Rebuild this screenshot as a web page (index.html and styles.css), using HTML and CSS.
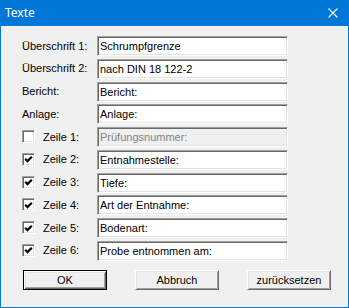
FILE: index.html
```html
<!DOCTYPE html>
<html lang="de">

<head>
    <meta charset="UTF-8">
    <title>Texte</title>
    <link rel="stylesheet" href="styles.css">
</head>

<body>
    <div class="window">
        <div class="titlebar">
            <span class="title">Texte</span>
            <span class="close">
                <svg width="10" height="10" viewBox="0 0 10 10">
                    <path d="M0.5 0.5 L9.5 9.5 M9.5 0.5 L0.5 9.5" stroke="#fff" stroke-width="1.1" fill="none" />
                </svg>
            </span>
        </div>

        <div class="client">
            <div class="rows">
                <div class="row">
                    <label class="lbl">Überschrift 1:</label>
                    <input class="field" type="text" value="Schrumpfgrenze">
                </div>
                <div class="row">
                    <label class="lbl">Überschrift 2:</label>
                    <input class="field" type="text" value="nach DIN 18 122-2">
                </div>
                <div class="row">
                    <label class="lbl">Bericht:</label>
                    <input class="field" type="text" value="Bericht:">
                </div>
                <div class="row">
                    <label class="lbl">Anlage:</label>
                    <input class="field" type="text" value="Anlage:">
                </div>

                <!-- Zeilen mit Checkbox -->
                <div class="row">
                    <label class="lbl check-lbl"><span class="chk"></span>Zeile 1:</label>
                    <input class="field" type="text" value="Prüfungsnummer:" disabled>
                </div>
                <div class="row">
                    <label class="lbl check-lbl"><span class="chk on"><svg width="9" height="9" viewBox="0 0 9 9"><path d="M1.2 3.8 L3.5 6.1 L7.8 1.8" stroke="#000" stroke-width="2.2" fill="none" /></svg></span>Zeile 2:</label>
                    <input class="field" type="text" value="Entnahmestelle:">
                </div>
                <div class="row">
                    <label class="lbl check-lbl"><span class="chk on"><svg width="9" height="9" viewBox="0 0 9 9"><path d="M1.2 3.8 L3.5 6.1 L7.8 1.8" stroke="#000" stroke-width="2.2" fill="none" /></svg></span>Zeile 3:</label>
                    <input class="field" type="text" value="Tiefe:">
                </div>
                <div class="row">
                    <label class="lbl check-lbl"><span class="chk on"><svg width="9" height="9" viewBox="0 0 9 9"><path d="M1.2 3.8 L3.5 6.1 L7.8 1.8" stroke="#000" stroke-width="2.2" fill="none" /></svg></span>Zeile 4:</label>
                    <input class="field" type="text" value="Art der Entnahme:">
                </div>
                <div class="row">
                    <label class="lbl check-lbl"><span class="chk on"><svg width="9" height="9" viewBox="0 0 9 9"><path d="M1.2 3.8 L3.5 6.1 L7.8 1.8" stroke="#000" stroke-width="2.2" fill="none" /></svg></span>Zeile 5:</label>
                    <input class="field" type="text" value="Bodenart:">
                </div>
                <div class="row">
                    <label class="lbl check-lbl"><span class="chk on"><svg width="9" height="9" viewBox="0 0 9 9"><path d="M1.2 3.8 L3.5 6.1 L7.8 1.8" stroke="#000" stroke-width="2.2" fill="none" /></svg></span>Zeile 6:</label>
                    <input class="field" type="text" value="Probe entnommen am:">
                </div>
            </div>

            <div class="buttons">
                <button class="btn default">OK</button>
                <button class="btn">Abbruch</button>
                <button class="btn">zurücksetzen</button>
            </div>
        </div>
    </div>
</body>

</html>
```

FILE: styles.css
```css
body {
    margin: 0;
    padding: 0;
    background: #f0f0f0;
    font-family: 'Liberation Sans', Arial, sans-serif;
    font-size: 11px;
    color: #000;
}

.window {
    box-sizing: border-box;
    height: 100vh;
    border: 1px solid #0078d7;
    border-top: none;
    background: #f0f0f0;
    display: flex;
    flex-direction: column;
}

.titlebar {
    height: 26px;
    margin: 0 -1px;
    background: #0078d7;
    color: #fff;
    display: flex;
    align-items: center;
    justify-content: space-between;
    padding: 0 11px 0 5px;
    flex-shrink: 0;
}

.title {
    font-family: 'Noto Sans', sans-serif;
    font-size: 12px;
    margin-top: -1px;
}

.close {
    display: flex;
    width: 10px;
    height: 10px;
}

/* Dialog content */
.client {
    padding: 10px 17px 0 21px;
}

.rows {
    display: flex;
    flex-direction: column;
    gap: 2.78px;
}

.row {
    display: grid;
    grid-template-columns: 75px 191px;
    height: 20px;
    align-items: center;
}

.lbl {
    display: flex;
    align-items: center;
    white-space: nowrap;
    margin-top: -1px;
}

.check-lbl {
    gap: 8px;
}

.chk {
    box-sizing: border-box;
    width: 13px;
    height: 13px;
    background: #fff;
    border: 1px solid;
    border-color: #a0a0a0 #fff #fff #a0a0a0;
    box-shadow: inset 1px 1px #696969, inset -1px -1px #e3e3e3;
    display: flex;
    align-items: center;
    justify-content: center;
}

.chk svg {
    margin: 1px 0 0 0;
}

.field {
    box-sizing: border-box;
    width: 191px;
    height: 20px;
    margin: 0;
    padding: 0 2px;
    font-family: inherit;
    font-size: 11px;
    color: #000;
    background: #fff;
    border: 1px solid;
    border-color: #a0a0a0 #fff #fff #a0a0a0;
    box-shadow: inset 1px 1px #696969, inset -1px -1px #e3e3e3;
    outline: none;
}

.field:disabled {
    background: #f0f0f0;
    color: #838383;
}

.buttons {
    display: flex;
    justify-content: space-between;
    margin-top: 9px;
    padding-left: 1px;
}

.btn {
    box-sizing: border-box;
    width: 84px;
    height: 20px;
    margin: 0;
    padding: 0;
    font-family: inherit;
    font-size: 11px;
    color: #000;
    background: #f0f0f0;
    border: 1px solid;
    border-color: #fff #696969 #696969 #fff;
    box-shadow: inset 1px 1px #e3e3e3, inset -1px -1px #a0a0a0;
}

.btn.default {
    border-color: #000;
    box-shadow: inset 1px 1px #fff, inset -1px -1px #696969, inset 2px 2px #e3e3e3, inset -2px -2px #a0a0a0;
}
```
